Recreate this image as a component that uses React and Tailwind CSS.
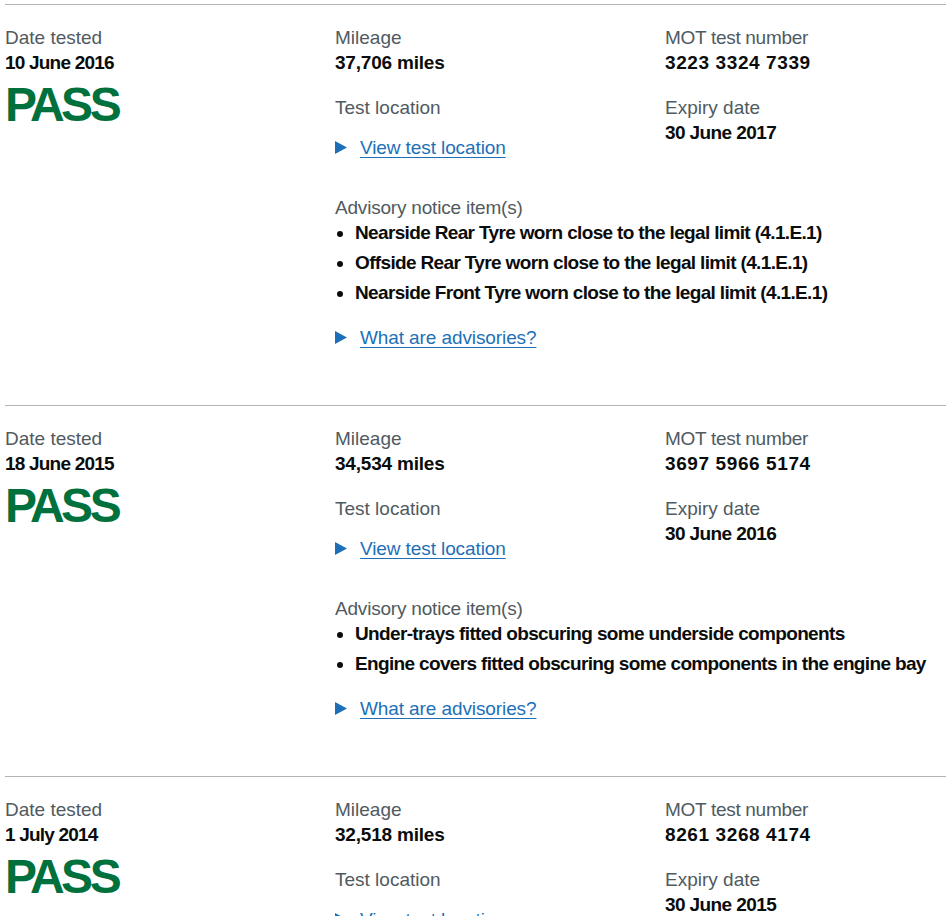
import React from "react";

const TESTS = [
  {
    date: "10 June 2016",
    mileage: "37,706 miles",
    number: "3223 3324 7339",
    expiry: "30 June 2017",
    advisories: [
      "Nearside Rear Tyre worn close to the legal limit (4.1.E.1)",
      "Offside Rear Tyre worn close to the legal limit (4.1.E.1)",
      "Nearside Front Tyre worn close to the legal limit (4.1.E.1)",
    ],
  },
  {
    date: "18 June 2015",
    mileage: "34,534 miles",
    number: "3697 5966 5174",
    expiry: "30 June 2016",
    advisories: [
      "Under-trays fitted obscuring some underside components",
      "Engine covers fitted obscuring some components in the engine bay",
    ],
  },
  {
    date: "1 July 2014",
    mileage: "32,518 miles",
    number: "8261 3268 4174",
    expiry: "30 June 2015",
    advisories: [],
  },
];

function Label({ children, className = "" }) {
  return <div className={"text-[#505a5f] " + className}>{children}</div>;
}

function Value({ children, className = "" }) {
  return <div className={"font-bold text-[#0b0c0c] " + className}>{children}</div>;
}

function Toggle({ children, className = "" }) {
  return (
    <div className={"flex items-center " + className}>
      <svg width="12" height="13" viewBox="0 0 12 13" className="mr-[13px] shrink-0">
        <path d="M0 0 L12 6.5 L0 13 Z" fill="#1d70b8" />
      </svg>
      <a href="#" className="text-[#1d70b8] underline underline-offset-[3px] decoration-1 tracking-[-0.1px]">
        {children}
      </a>
    </div>
  );
}

function TestResult({ t }) {
  return (
    <div className="border-t border-[#b1b4b6] pt-5 pb-[55px] grid grid-cols-[330px_1fr]">
      <div>
        <Label>Date tested</Label>
        <Value className="tracking-[-0.8px]">{t.date}</Value>
        <div className="mt-[6px] text-[48px] leading-[48px] font-bold tracking-[-3.5px] text-[#00703c]">
          PASS
        </div>
      </div>
      <div>
        <div className="grid grid-cols-[330px_1fr]">
          <div>
            <Label>Mileage</Label>
            <Value className="tracking-[-0.2px]">{t.mileage}</Value>
            <Label className="mt-5">Test location</Label>
            <Toggle className="mt-[15px]">View test location</Toggle>
          </div>
          <div>
            <Label className="tracking-[-0.3px]">MOT test number</Label>
            <Value className="tracking-[0.6px]">{t.number}</Value>
            <Label className="mt-5">Expiry date</Label>
            <Value className="tracking-[-0.6px]">{t.expiry}</Value>
          </div>
        </div>
        {t.advisories.length > 0 && (
          <div className="mt-[35px]">
            <Label className="tracking-[-0.2px]">Advisory notice item(s)</Label>
            <ul className="list-disc pl-5 flex flex-col gap-[5px]">
              {t.advisories.map((a) => (
                <li key={a} className="font-bold text-[#0b0c0c] tracking-[-0.65px] whitespace-nowrap">
                  {a}
                </li>
              ))}
            </ul>
            <Toggle className="mt-5">What are advisories?</Toggle>
          </div>
        )}
      </div>
    </div>
  );
}

export default function App() {
  return (
    <div
      className="bg-white min-h-screen pt-1 pl-[5px] text-[19px] leading-[25px] overflow-hidden"
      style={{ fontFamily: '"Liberation Sans", Arial, sans-serif' }}
    >
      {TESTS.map((t) => (
        <TestResult key={t.number} t={t} />
      ))}
    </div>
  );
}
